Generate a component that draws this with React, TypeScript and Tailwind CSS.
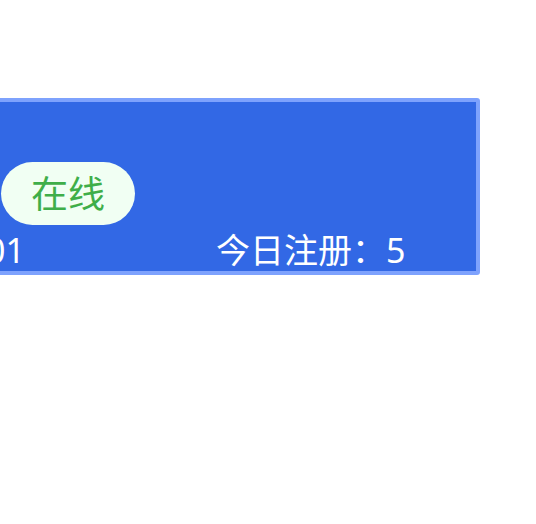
export default function App() {
  return (
    <div className="min-h-screen bg-white pt-[98px] overflow-hidden [font-family:'Noto_Sans','Noto_Sans_CJK_SC',sans-serif]">
      <div className="ml-[-260px] w-[740px] rounded-[3px] border-4 border-[#7ea2fd] bg-[#3268e5] pt-[60px] pb-[4px]">
        {/* status row */}
        <div className="flex items-center pl-[257px]">
          <span className="flex h-[63px] items-center rounded-full bg-[#f1fff3] px-[30px] text-[37px] leading-none text-[#3fae49]">
            在线
          </span>
        </div>
        {/* stats row */}
        <div className="mt-[8px] flex text-[34px] leading-[34px] text-white">
          <div className="w-[281px] text-right">用户编号：1001</div>
          <div className="ml-[191px]">今日注册：5</div>
        </div>
      </div>
    </div>
  );
}
